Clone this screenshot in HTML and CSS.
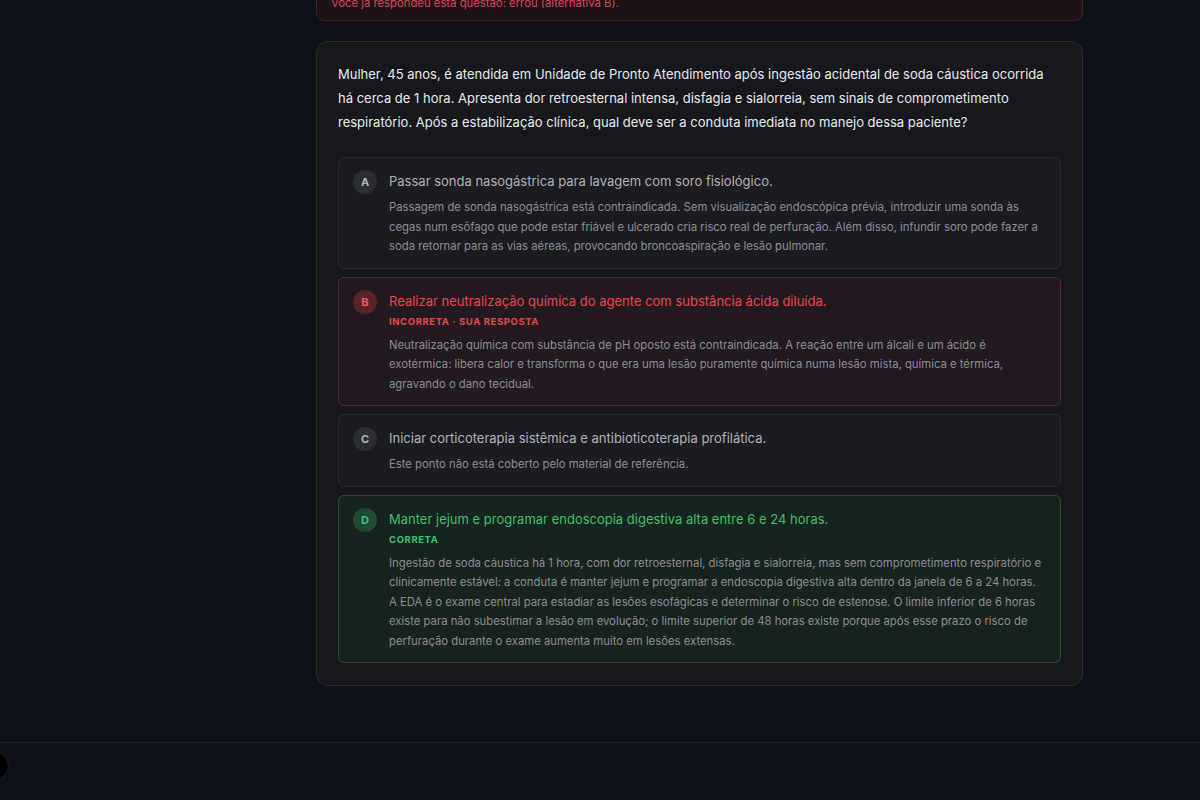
FILE: index.html
```html
<!DOCTYPE html>
<html lang="pt-BR">
<head>
<meta charset="utf-8">
<title>Questão</title>
<link rel="stylesheet" href="styles.css">
</head>
<body>
<div class="page">
  <main class="column">
    <div class="alert">Você já respondeu esta questão: errou (alternativa B).</div>
    <section class="card">
      <p class="stem">Mulher, 45 anos, é atendida em Unidade de Pronto Atendimento após ingestão acidental de soda cáustica ocorrida há cerca de 1 hora. Apresenta dor retroesternal intensa, disfagia e sialorreia, sem sinais de comprometimento respiratório. Após a estabilização clínica, qual deve ser a conduta imediata no manejo dessa paciente?</p>
      <div class="options">
        <div class="option">
          <span class="badge">A</span>
          <div class="body">
            <div class="title">Passar sonda nasogástrica para lavagem com soro fisiológico.</div>
            <p class="expl">Passagem de sonda nasogástrica está contraindicada. Sem visualização endoscópica prévia, introduzir uma sonda às cegas num esôfago que pode estar friável e ulcerado cria risco real de perfuração. Além disso, infundir soro pode fazer a soda retornar para as vias aéreas, provocando broncoaspiração e lesão pulmonar.</p>
          </div>
        </div>
        <div class="option wrong">
          <span class="badge">B</span>
          <div class="body">
            <div class="title">Realizar neutralização química do agente com substância ácida diluída.</div>
            <div class="tag">INCORRETA · SUA RESPOSTA</div>
            <p class="expl">Neutralização química com substância de pH oposto está contraindicada. A reação entre um álcali e um ácido é exotérmica: libera calor e transforma o que era uma lesão puramente química numa lesão mista, química e térmica, agravando o dano tecidual.</p>
          </div>
        </div>
        <div class="option">
          <span class="badge">C</span>
          <div class="body">
            <div class="title">Iniciar corticoterapia sistêmica e antibioticoterapia profilática.</div>
            <p class="expl">Este ponto não está coberto pelo material de referência.</p>
          </div>
        </div>
        <div class="option right">
          <span class="badge">D</span>
          <div class="body">
            <div class="title">Manter jejum e programar endoscopia digestiva alta entre 6 e 24 horas.</div>
            <div class="tag">CORRETA</div>
            <p class="expl">Ingestão de soda cáustica há 1 hora, com dor retroesternal, disfagia e sialorreia, mas sem comprometimento respiratório e clinicamente estável: a conduta é manter jejum e programar a endoscopia digestiva alta dentro da janela de 6 a 24 horas. A EDA é o exame central para estadiar as lesões esofágicas e determinar o risco de estenose. O limite inferior de 6 horas existe para não subestimar a lesão em evolução; o limite superior de 48 horas existe porque após esse prazo o risco de perfuração durante o exame aumenta muito em lesões extensas.</p>
          </div>
        </div>
      </div>
    </section>
  </main>
  <footer class="bottombar"></footer>
  <span class="fab"></span>
</div>
</body>
</html>
```

FILE: styles.css
```css
* { box-sizing: border-box; }
html, body {
  margin: 0;
  height: 100%;
  background: #0f1118;
  overflow: hidden;
}
body {
  font-family: "Inter", "Noto Sans", sans-serif;
  color: #e4e4e8;
}
.page {
  position: relative;
  height: 800px;
  display: flex;
  flex-direction: column;
}
.column {
  width: 767px;
  margin: -17px 0 0 316px;
  display: flex;
  flex-direction: column;
  gap: 20px;
  height: 759px;
}
.alert {
  background: #1e1319;
  border: 1px solid #4a1f27;
  border-radius: 8px;
  padding: 10px 14px 8px;
  font-size: 11.3px;
  line-height: 18px;
  color: #d9484f;
}
.card {
  background: #17181e;
  border: 1px solid #2a2b31;
  border-radius: 12px;
  padding: 20px 21px 22px;
}
.stem {
  margin: 0;
  font-size: 13px;
  line-height: 24px;
  color: #e8e8ec;
}
.options {
  margin-top: 23px;
  display: flex;
  flex-direction: column;
  gap: 8px;
}
.option {
  display: flex;
  gap: 12px;
  align-items: flex-start;
  background: #1b1c21;
  border: 1px solid #2b2c32;
  border-radius: 6px;
  padding: 12px 14px 11px;
}
.badge {
  flex: none;
  width: 24px;
  height: 24px;
  border-radius: 50%;
  background: #2c2d33;
  color: #b4b4bc;
  font-size: 11px;
  font-weight: 700;
  display: flex;
  align-items: center;
  justify-content: center;
}
.body { flex: 1; min-width: 0; }
.title {
  font-size: 13px;
  line-height: 22px;
  color: #b1b1b8;
}
.tag {
  margin-top: 3px;
  font-size: 9.5px;
  font-weight: 700;
  letter-spacing: 0.6px;
  line-height: 14px;
}
.expl {
  margin: 6px 0 0;
  font-size: 11.3px;
  line-height: 19.5px;
  color: #8d8d95;
}
.tag + .expl { margin-top: 7px; }
.wrong {
  background: #231920;
  border-color: #532a31;
}
.wrong .badge { background: #5a2329; color: #ee5a5f; }
.wrong .title, .wrong .tag { color: #e5484d; }
.right {
  background: #17241e;
  border-color: #245238;
}
.right .badge { background: #1d4a31; color: #3fc172; }
.right .title, .right .tag { color: #3fbf6e; }
.bottombar {
  flex: 1;
  border-top: 1px solid #22232a;
  background: #0f1118;
}
.fab {
  position: absolute;
  left: -19px;
  top: 752px;
  width: 28px;
  height: 28px;
  border-radius: 50%;
  background: #000;
  border: 1px solid #1e1f25;
}
```
